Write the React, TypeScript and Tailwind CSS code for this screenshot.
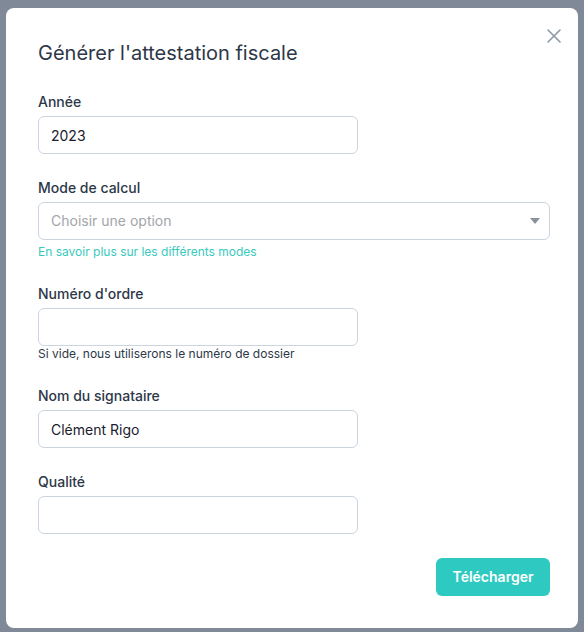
function Label({ children }: { children: React.ReactNode }) {
  return <label className="mb-1 block text-sm leading-5 font-medium text-[#2d3748]">{children}</label>
}

function TextInput({ value }: { value?: string }) {
  return (
    <input
      type="text"
      defaultValue={value}
      className="block h-[38px] w-[320px] rounded-md border border-[#cbd5e0] bg-white px-3 text-sm text-[#1a202c] focus:outline-none"
    />
  )
}

export default function App() {
  return (
    <div
      className="flex min-h-[632px] w-full items-start justify-center bg-[#7f8998] pt-2"
      style={{ fontFamily: 'Inter, "Noto Sans", sans-serif' }}
    >
      <div className="relative w-[572px] rounded-lg bg-white pt-[31px] pr-7 pb-8 pl-8">
        {/* fermer */}
        <button className="absolute top-[21px] right-[17px] text-[#8e98a8]">
          <svg width="14" height="14" viewBox="0 0 14 14" fill="none" stroke="currentColor" strokeWidth="1.6" strokeLinecap="round">
            <path d="M1 1 L13 13 M13 1 L1 13" />
          </svg>
        </button>

        <h2 className="mb-[25px] text-xl leading-7 font-normal text-[#2d3748]">Générer l'attestation fiscale</h2>

        <div>
          <Label>Année</Label>
          <TextInput value="2023" />
        </div>

        <div className="mt-6">
          <Label>Mode de calcul</Label>
          <div className="relative">
            <div className="flex h-[38px] w-full items-center rounded-md border border-[#cbd5e0] bg-white px-3 text-sm text-[#a3a5aa]">
              Choisir une option
            </div>
            <svg className="absolute top-[16px] right-[10px]" width="10" height="6" viewBox="0 0 10 6">
              <path d="M0 0 L10 0 L5 6 Z" fill="#8b919b" />
            </svg>
          </div>
          <a className="mt-1 block text-xs leading-4 text-[#38c9bd]">En savoir plus sur les différents modes</a>
        </div>

        <div className="mt-6">
          <Label>Numéro d'ordre</Label>
          <TextInput />
          <p className="text-xs leading-4 text-[#2d3748]">Si vide, nous utiliserons le numéro de dossier</p>
        </div>

        <div className="mt-6">
          <Label>Nom du signataire</Label>
          <TextInput value="Clément Rigo" />
        </div>

        <div className="mt-6">
          <Label>Qualité</Label>
          <TextInput />
        </div>

        <div className="mt-6 flex justify-end">
          <button className="h-[38px] w-[114px] rounded-md bg-[#2ecac1] text-sm font-semibold text-white">
            Télécharger
          </button>
        </div>
      </div>
    </div>
  )
}
